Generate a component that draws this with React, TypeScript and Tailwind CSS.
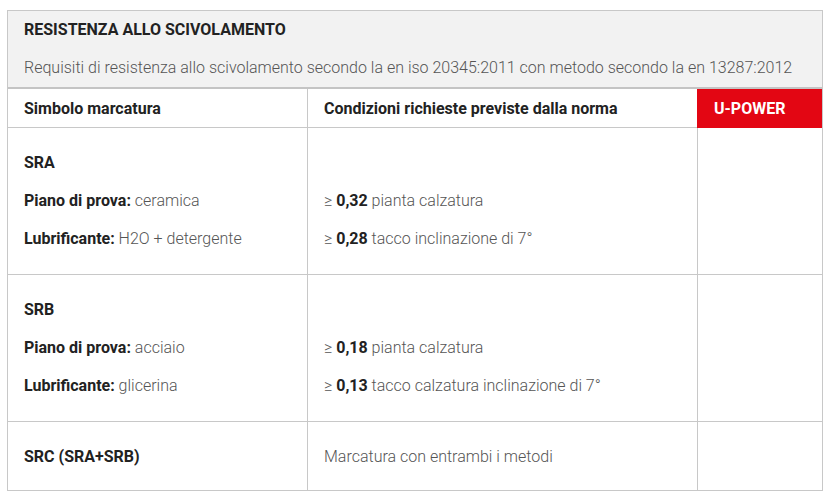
import React from "react";

const B = ({ children }: { children: React.ReactNode }) => (
  <span className="font-bold text-[#222]">{children}</span>
);

const Line = ({ children }: { children?: React.ReactNode }) => (
  <div className="h-[22px] leading-[22px] whitespace-nowrap">{children}</div>
);

export default function App() {
  return (
    <div
      className="w-[830px] h-[501px] bg-white pt-[10px] pl-[7px]"
      style={{ fontFamily: "Roboto, 'Liberation Sans', sans-serif" }}
    >
      <div className="w-[816px] border border-[#c8c8c8] text-[16px] font-light text-[#555]">
        <div className="bg-[#f2f2f2] border-b-2 border-[#c4c4c4] h-[78px] px-4 pt-[8px]">
          <div className="leading-[22px] font-bold text-[#222]">RESISTENZA ALLO SCIVOLAMENTO</div>
          <div className="leading-[22px] mt-4 whitespace-nowrap">
            Requisiti di resistenza allo scivolamento secondo la en iso 20345:2011 con metodo secondo la en 13287:2012
          </div>
        </div>
        <div className="grid grid-cols-[299px_390px_125px]">
          {/* header */}
          <div className="h-[39px] px-4 pt-[9px] border-b border-[#c8c8c8]">
            <Line><B>Simbolo marcatura</B></Line>
          </div>
          <div className="h-[39px] px-4 pt-[9px] border-b border-l border-[#c8c8c8]">
            <Line><B>Condizioni richieste previste dalla norma</B></Line>
          </div>
          <div className="h-[39px] px-4 pt-[9px] border-b border-l border-[#e30613] bg-[#e30613] -mb-px">
            <Line><span className="font-bold text-white">U-POWER</span></Line>
          </div>

          {/* SRA */}
          <div className="h-[147px] px-4 pt-[24px] border-b border-[#c8c8c8] flex flex-col gap-4">
            <Line><B>SRA</B></Line>
            <Line><B>Piano di prova:</B> ceramica</Line>
            <Line><B>Lubrificante:</B> H2O + detergente</Line>
          </div>
          <div className="h-[147px] px-4 pt-[24px] border-b border-l border-[#c8c8c8] flex flex-col gap-4">
            <Line />
            <Line>≥ <B>0,32</B> pianta calzatura</Line>
            <Line>≥ <B>0,28</B> tacco inclinazione di 7°</Line>
          </div>
          <div className="h-[147px] border-b border-l border-[#c8c8c8]" />

          {/* SRB */}
          <div className="h-[147px] px-4 pt-[24px] border-b border-[#c8c8c8] flex flex-col gap-4">
            <Line><B>SRB</B></Line>
            <Line><B>Piano di prova:</B> acciaio</Line>
            <Line><B>Lubrificante:</B> glicerina</Line>
          </div>
          <div className="h-[147px] px-4 pt-[24px] border-b border-l border-[#c8c8c8] flex flex-col gap-4">
            <Line />
            <Line>≥ <B>0,18</B> pianta calzatura</Line>
            <Line>≥ <B>0,13</B> tacco calzatura inclinazione di 7°</Line>
          </div>
          <div className="h-[147px] border-b border-l border-[#c8c8c8]" />

          {/* SRC */}
          <div className="h-[68px] px-4 pt-[24px]">
            <Line><B>SRC (SRA+SRB)</B></Line>
          </div>
          <div className="h-[68px] px-4 pt-[24px] border-l border-[#c8c8c8]">
            <Line>Marcatura con entrambi i metodi</Line>
          </div>
          <div className="h-[68px] border-l border-[#c8c8c8]" />
        </div>
      </div>
    </div>
  );
}
